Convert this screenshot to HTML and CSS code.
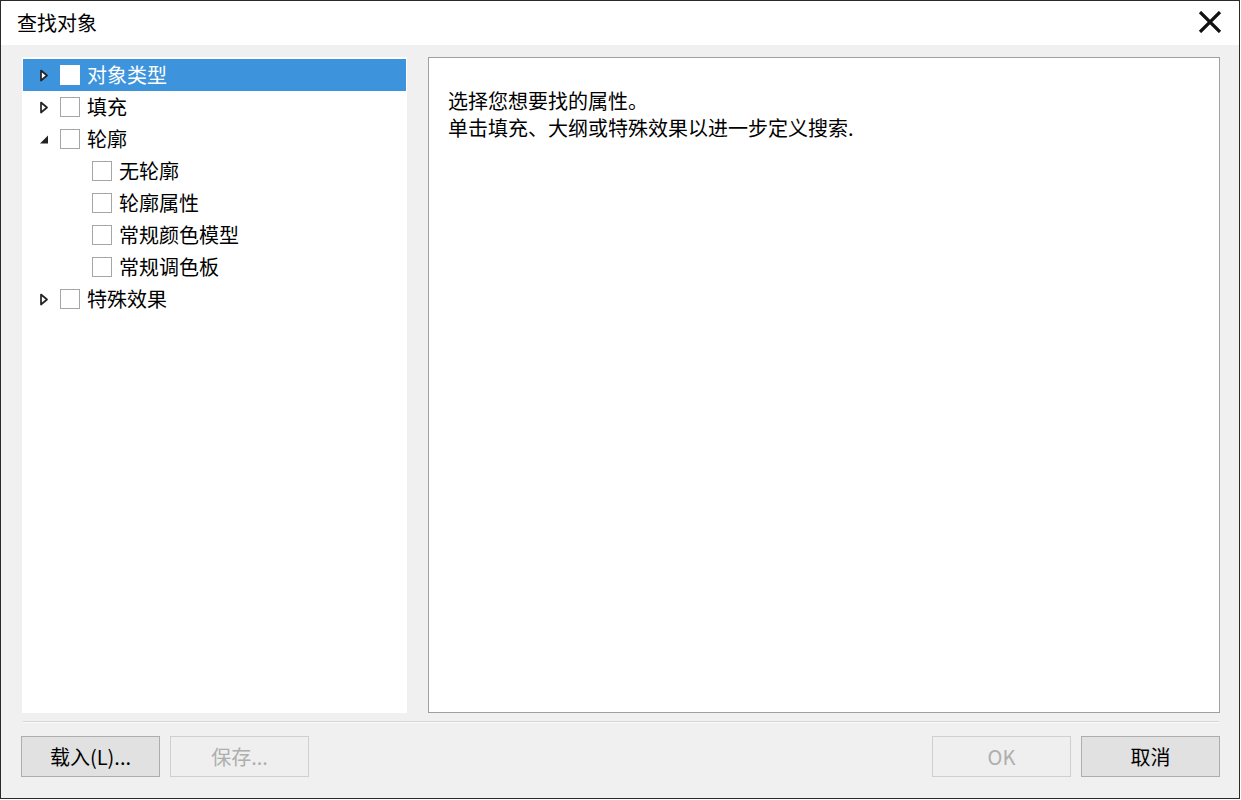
FILE: index.html
```html
<!DOCTYPE html>
<html lang="zh-CN">
<head>
<meta charset="utf-8">
<title>查找对象</title>
<link rel="stylesheet" href="styles.css">
</head>
<body>
<div class="window">
  <div class="titlebar">
    <span class="title">查找对象</span>
    <span class="close" aria-label="关闭">
      <svg width="24" height="22" viewBox="0 0 24 22"><path d="M2 1 L22 21 M22 1 L2 21" stroke="#111" stroke-width="3.2" fill="none"/></svg>
    </span>
  </div>
  <div class="body">
    <div class="main">
      <div class="tree">
        <div class="row selected">
          <span class="arrow"><svg width="10" height="13" viewBox="0 0 10 13"><path d="M2 1.5 L8 6.5 L2 11.5 Z" fill="#fff" stroke="#222" stroke-width="1.7" stroke-linejoin="round"/></svg></span>
          <span class="cb"></span><span class="label">对象类型</span>
        </div>
        <div class="row">
          <span class="arrow"><svg width="10" height="13" viewBox="0 0 10 13"><path d="M2 1.5 L8 6.5 L2 11.5 Z" fill="#fff" stroke="#222" stroke-width="1.7" stroke-linejoin="round"/></svg></span>
          <span class="cb"></span><span class="label">填充</span>
        </div>
        <div class="row">
          <span class="arrow"><svg width="10" height="13" viewBox="0 0 10 13"><path d="M9 2.5 L9 10.5 L1 10.5 Z" fill="#222"/></svg></span>
          <span class="cb"></span><span class="label">轮廓</span>
        </div>
        <div class="row child">
          <span class="arrow"></span><span class="cb"></span><span class="label">无轮廓</span>
        </div>
        <div class="row child">
          <span class="arrow"></span><span class="cb"></span><span class="label">轮廓属性</span>
        </div>
        <div class="row child">
          <span class="arrow"></span><span class="cb"></span><span class="label">常规颜色模型</span>
        </div>
        <div class="row child">
          <span class="arrow"></span><span class="cb"></span><span class="label">常规调色板</span>
        </div>
        <div class="row">
          <span class="arrow"><svg width="10" height="13" viewBox="0 0 10 13"><path d="M2 1.5 L8 6.5 L2 11.5 Z" fill="#fff" stroke="#222" stroke-width="1.7" stroke-linejoin="round"/></svg></span>
          <span class="cb"></span><span class="label">特殊效果</span>
        </div>
      </div>
      <div class="info">
        <p>选择您想要找的属性。</p>
        <p>单击填充、大纲或特殊效果以进一步定义搜索.</p>
      </div>
    </div>
    <div class="separator"></div>
    <div class="buttons">
      <div class="group">
        <button class="btn">载入(L)...</button>
        <button class="btn disabled">保存...</button>
      </div>
      <div class="group">
        <button class="btn disabled">OK</button>
        <button class="btn">取消</button>
      </div>
    </div>
  </div>
</div>
</body>
</html>
```
FILE: styles.css
```css
* { box-sizing: border-box; }
html, body { margin: 0; padding: 0; background: #fff; }
body {
  font-family: "Noto Sans CJK SC", "Microsoft YaHei", sans-serif;
  font-size: 20px;
  color: #000;
}
.window {
  width: 1240px;
  height: 799px;
  border: 1.5px solid #2a2a2a;
  background: #f0f0f0;
  display: flex;
  flex-direction: column;
}
.titlebar {
  height: 44px;
  background: #fff;
  display: flex;
  align-items: center;
  justify-content: space-between;
  padding: 0 17px 0 16px;
  flex: none;
}
.title { font-size: 20px; line-height: 24px; }
.close { display: flex; margin-top: -3px; }
.body {
  flex: 1;
  display: flex;
  flex-direction: column;
  padding: 12px 19px 0 21px;
}
.main {
  display: flex;
  gap: 21px;
  height: 656px;
}
.tree {
  width: 385px;
  background: #fff;
  padding: 2px 1px;
}
.row {
  height: 32px;
  display: flex;
  align-items: center;
  line-height: 24px;
}
.row.selected { background: #3d94dc; color: #fff; }
.arrow {
  width: 10px;
  margin-left: 16px;
  display: flex;
  align-items: center;
  justify-content: center;
}
.row.child .arrow { margin-left: 48px; }
.cb {
  width: 20px;
  height: 20px;
  margin-left: 11px;
  border: 1px solid #a6a6a6;
  background: #fff;
}
.row.selected .cb { border-color: #fff; }
.label { margin-left: 7px; }
.info {
  flex: 1;
  background: #fff;
  border: 1px solid #a0a0a0;
  padding: 29px 19px;
}
.info p { margin: 0; line-height: 27px; }
.separator {
  margin-top: 8px;
  height: 2px;
  border-top: 1px solid #d5d5d5;
  border-bottom: 1px solid #fbfbfb;
  margin-right: 1px;
  margin-left: 1px;
}
.buttons {
  margin-top: 13px;
  margin-left: -1px;
  display: flex;
  justify-content: space-between;
}
.group { display: flex; gap: 10px; }
.btn {
  width: 139px;
  height: 41px;
  font-family: inherit;
  font-size: 20px;
  color: #000;
  background: #e1e1e1;
  border: 1px solid #adadad;
  padding: 0;
  line-height: 24px;
}
.btn.disabled {
  background: #efefef;
  border-color: #cfcfcf;
  color: #aeaeae;
}
```
